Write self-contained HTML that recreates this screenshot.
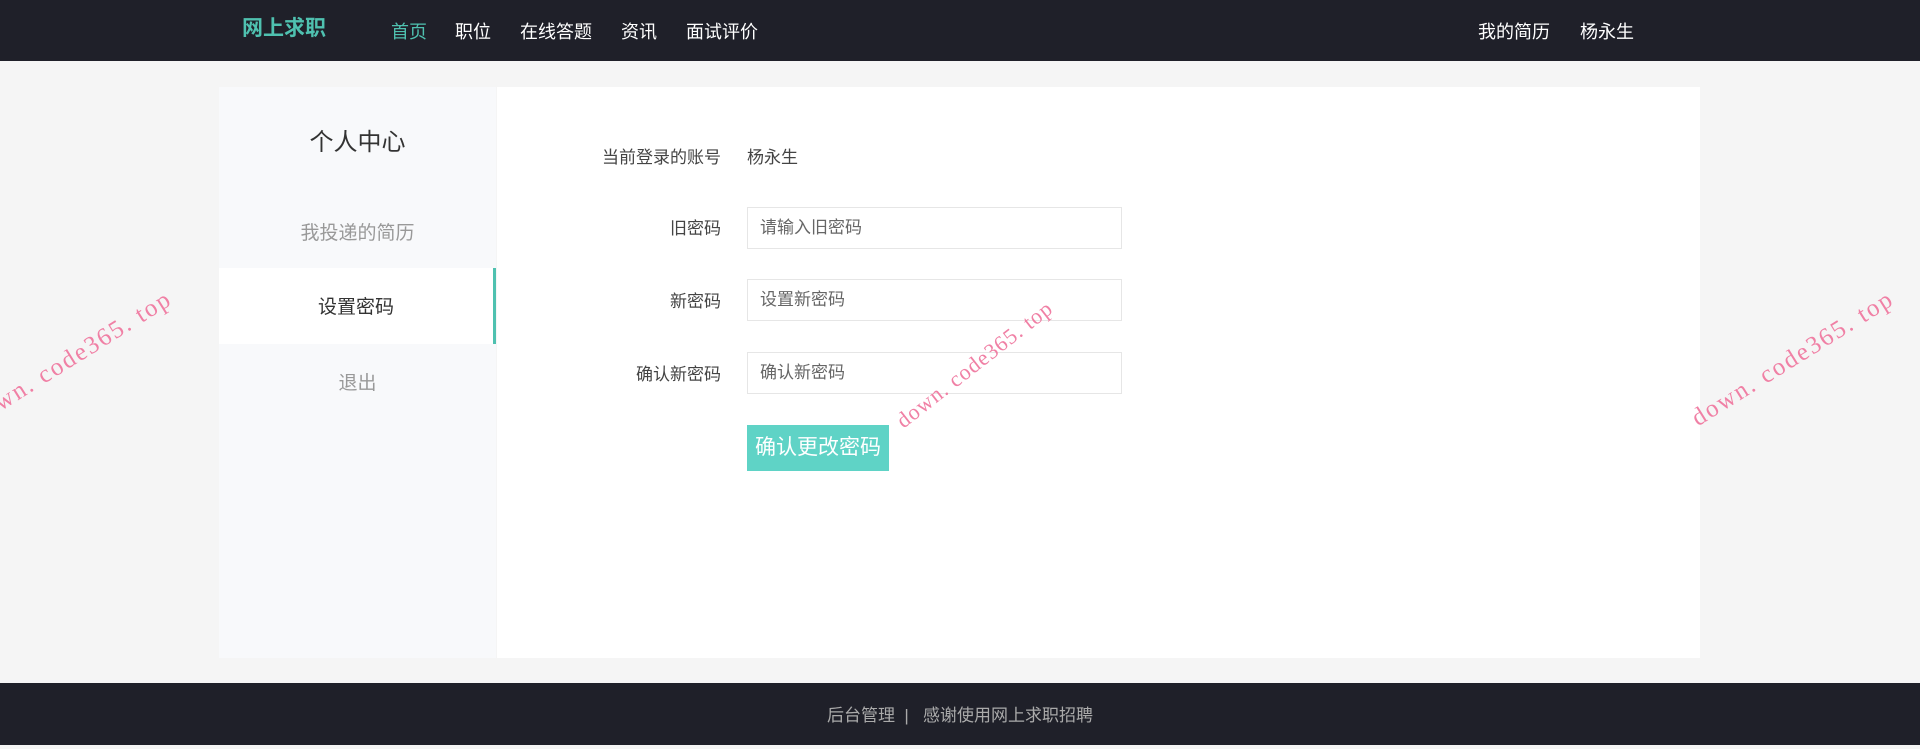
<!DOCTYPE html>
<html><head><meta charset="utf-8"><style>
*{margin:0;padding:0;box-sizing:border-box}
body{width:1920px;height:745px;background:#f5f5f5;font-family:"Liberation Sans","Noto Sans CJK SC",sans-serif;position:relative;overflow:hidden}
.hd{position:absolute;left:0;top:0;width:1920px;height:61px;background:#1f2029}
.hd span{position:absolute;top:20px;font-size:18px;color:#fff;line-height:24px}
.logo{color:#4fc1b0!important;font-weight:bold;font-size:21px!important}
.side{position:absolute;left:219px;top:87px;width:277px;height:571px;background:#f8f9fb}
.side div{position:absolute;left:0;width:277px;text-align:center}
.main{position:absolute;left:497px;top:87px;width:1203px;height:571px;background:#fff}
.lbl{position:absolute;right:calc(1920px - 721px);font-size:17px;color:#444;white-space:nowrap;text-align:right}
.inp{position:absolute;left:747px;width:375px;height:42px;border:1px solid #e6e6e6;background:#fff;font-size:17px;color:#666;padding-left:12px;line-height:40px}
.btn{position:absolute;left:747px;top:425px;width:142px;height:46px;background:#5fd3c6;color:#fff;font-size:21px;line-height:46px;text-align:center}
.ft{position:absolute;left:0;top:683px;width:1920px;height:62px;background:#1f2029;color:#aaa;text-align:center;font-size:17px;line-height:66px}
.wm{position:absolute;font-family:"Liberation Serif",serif;font-size:22px;color:#f080a5;letter-spacing:1px;transform-origin:0 100%;transform:rotate(-38deg);white-space:nowrap;line-height:22px}
.wm2{font-size:25px;letter-spacing:2px;transform:rotate(-32deg)}
</style></head><body>
<div class="hd">
<span class="logo" style="left:242px;top:17px">网上求职</span>
<span style="left:391px;color:#4fc1b0">首页</span>
<span style="left:455px">职位</span>
<span style="left:520px">在线答题</span>
<span style="left:621px">资讯</span>
<span style="left:686px">面试评价</span>
<span style="left:1478px">我的简历</span>
<span style="left:1580px">杨永生</span>
</div>
<div class="side">
<div style="top:41px;font-size:24px;color:#333;line-height:30px">个人中心</div>
<div style="top:133px;font-size:19px;color:#999;line-height:28px">我投递的简历</div>
<div style="top:181px;height:76px;background:#fff;border-right:3px solid #4fc1b0;font-size:19px;color:#333;line-height:80px">设置密码</div>
<div style="top:283px;font-size:19px;color:#999;line-height:28px">退出</div>
</div>
<div class="main"></div>
<div class="lbl" style="top:143px">当前登录的账号</div>
<div style="position:absolute;left:747px;top:143px;font-size:17px;color:#444">杨永生</div>
<div class="lbl" style="top:214px">旧密码</div>
<div class="inp" style="top:207px">请输入旧密码</div>
<div class="lbl" style="top:287px">新密码</div>
<div class="inp" style="top:279px">设置新密码</div>
<div class="lbl" style="top:360px">确认新密码</div>
<div class="inp" style="top:352px">确认新密码</div>
<div class="btn">确认更改密码</div>
<div class="ft">后台管理 &nbsp;| &nbsp; 感谢使用网上求职招聘</div>
<div class="wm wm2" style="left:-22px;top:408px">down. code365. top</div>
<div class="wm" style="left:906px;top:410px">down. code365. top</div>
<div class="wm wm2" style="left:1700px;top:408px">down. code365. top</div>
</body></html>
